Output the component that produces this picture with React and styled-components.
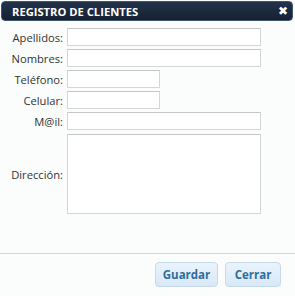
import styled, { createGlobalStyle } from "styled-components";

const GlobalStyle = createGlobalStyle`
  html, body {
    margin: 0;
    padding: 0;
    background: #fbfdfd;
  }
  * {
    box-sizing: border-box;
  }
`;

const Dialog = styled.div`
  width: 295px;
  height: 296px;
  display: flex;
  flex-direction: column;
  background: #fbfdfd;
  font-family: "Open Sans", "DejaVu Sans", sans-serif;
  color: #333;
`;

const TitleBar = styled.div`
  margin: 1px 2px 0 1px;
  height: 20px;
  display: flex;
  align-items: center;
  justify-content: space-between;
  padding: 0 4px 0 10px;
  background: linear-gradient(#22324a, #17222f);
  border: 1px solid #3d5675;
  border-radius: 4px;
  color: #fff;
`;

const Title = styled.span`
  font-size: 11.2px;
  font-weight: 700;
`;

const CloseButton = styled.span`
  font-size: 12px;
  font-weight: 700;
  line-height: 1;
  cursor: pointer;
`;

const Form = styled.form`
  flex: 1;
  display: flex;
  flex-direction: column;
  gap: 3px;
  padding-top: 7px;
`;

const Row = styled.div`
  display: flex;
  align-items: center;
  margin-top: ${(p) => p.$top || 0}px;
`;

const Label = styled.label`
  width: 67px;
  padding-right: 4px;
  text-align: right;
  font-size: 11.2px;
  color: #333;
`;

const Input = styled.input`
  width: ${(p) => p.$width}px;
  height: 18px;
  margin: 0;
  padding: 1px 3px;
  border: 1px solid #d4d7da;
  border-top-color: #c4c6c8;
  background: #fff;
  font: inherit;
  font-size: 11px;
  outline: none;
`;

const TextArea = styled.textarea`
  width: 194px;
  height: 80px;
  margin: 0;
  padding: 2px 3px;
  border: 1px solid #d4d7da;
  border-top-color: #c4c6c8;
  background: #fff;
  resize: none;
  font: inherit;
  font-size: 11px;
  outline: none;
`;

const Footer = styled.div`
  height: 43px;
  border-top: 1px solid #c9d8e2;
  display: flex;
  justify-content: flex-end;
  align-items: flex-start;
  gap: 7px;
  padding: 8px 14px 0 0;
`;

const Button = styled.button`
  width: ${(p) => p.$width}px;
  height: 25px;
  padding: 0;
  border: 1px solid #c5dbec;
  border-radius: 4px;
  background: linear-gradient(#eaf3fc, #d9e8f6);
  color: #2e6e9e;
  font-family: inherit;
  font-size: 11.5px;
  font-weight: 700;
  cursor: pointer;
`;

const fields = [
  { label: "Apellidos:", width: 194 },
  { label: "Nombres:", width: 194 },
  { label: "Teléfono:", width: 93 },
  { label: "Celular:", width: 93 },
  { label: "M@il:", width: 194 },
];

export default function App() {
  return (
    <>
      <GlobalStyle />
      <Dialog>
        <TitleBar>
          <Title>REGISTRO DE CLIENTES</Title>
          <CloseButton>✖</CloseButton>
        </TitleBar>
        <Form>
          {fields.map((f) => (
            <Row key={f.label}>
              <Label>{f.label}</Label>
              <Input $width={f.width} />
            </Row>
          ))}
          <Row $top={1}>
            <Label>Dirección:</Label>
            <TextArea />
          </Row>
        </Form>
        <Footer>
          <Button $width={63}>Guardar</Button>
          <Button $width={56}>Cerrar</Button>
        </Footer>
      </Dialog>
    </>
  );
}
